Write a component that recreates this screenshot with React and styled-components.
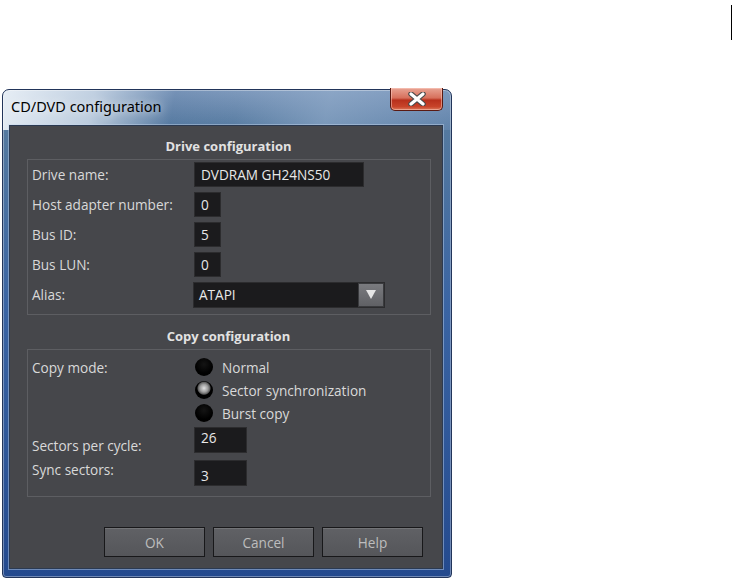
import styled, { createGlobalStyle } from "styled-components";

const GlobalStyle = createGlobalStyle`
  html, body {
    margin: 0;
    padding: 0;
    background: #ffffff;
  }
`;

export default function App() {
  return (
    <Page>
      <GlobalStyle />
      <TopStrip>
        <Mark />
      </TopStrip>
      <Window>
        <TitleBar>
          <Title>CD/DVD configuration</Title>
          <CloseButton>
            <svg width="18" height="14" viewBox="0 0 18 14">
              <path
                d="M3 2 L15 12 M15 2 L3 12"
                stroke="#4a4a4a"
                strokeWidth="5.5"
                strokeLinecap="round"
              />
              <path
                d="M3 2 L15 12 M15 2 L3 12"
                stroke="#ffffff"
                strokeWidth="3.2"
                strokeLinecap="round"
              />
            </svg>
          </CloseButton>
        </TitleBar>
        <Client>
          <SectionTitle>Drive configuration</SectionTitle>
          <Group>
            <Row>
              <Label>Drive name:</Label>
              <Field $w={170}>DVDRAM GH24NS50</Field>
            </Row>
            <Row>
              <Label>Host adapter number:</Label>
              <Field $w={27}>0</Field>
            </Row>
            <Row>
              <Label>Bus ID:</Label>
              <Field $w={27}>5</Field>
            </Row>
            <Row>
              <Label>Bus LUN:</Label>
              <Field $w={27}>0</Field>
            </Row>
            <Row>
              <Label>Alias:</Label>
              <Select>
                <SelectText>ATAPI</SelectText>
                <DropButton>
                  <svg width="10" height="9" viewBox="0 0 10 9">
                    <path d="M0 0 H10 L5 9 Z" fill="#e6e6e6" />
                  </svg>
                </DropButton>
              </Select>
            </Row>
          </Group>

          <SectionTitle>Copy configuration</SectionTitle>
          <Group $pad="8px 0 10px 4px">
            <ModeRow>
              <Label>Copy mode:</Label>
              <Radios>
                <RadioItem>
                  <Radio />
                  Normal
                </RadioItem>
                <RadioItem>
                  <Radio $on />
                  Sector synchronization
                </RadioItem>
                <RadioItem>
                  <Radio />
                  Burst copy
                </RadioItem>
              </Radios>
            </ModeRow>
            <NumRow>
              <NumLabel $shift={9}>Sectors per cycle:</NumLabel>
              <NumField>26</NumField>
            </NumRow>
            <NumRow>
              <NumLabel $shift={0}>Sync sectors:</NumLabel>
              <NumField $top={7}>3</NumField>
            </NumRow>
          </Group>

          <Buttons>
            <Button>OK</Button>
            <Button>Cancel</Button>
            <Button>Help</Button>
          </Buttons>
        </Client>
      </Window>
    </Page>
  );
}

//----- Styled Components

const Page = styled.div`
  width: 733px;
  height: 579px;
  overflow: hidden;
  font-family: "Open Sans", "Noto Sans", sans-serif;
`;

const TopStrip = styled.div`
  display: flex;
  justify-content: flex-end;
  height: 89px;
  padding-right: 1px;
  box-sizing: border-box;
`;

const Mark = styled.div`
  width: 1px;
  height: 35px;
  margin-top: 5px;
  background: #000000;
`;

const Window = styled.div`
  margin-left: 2px;
  width: 450px;
  height: 489px;
  box-sizing: border-box;
  padding: 0 8px 8px 6px;
  border-radius: 7px 7px 4px 4px;
  border: 1px solid #22355a;
  background:
    linear-gradient(
      100deg,
      rgba(236, 242, 248, 0.95) 0%,
      rgba(205, 218, 232, 0.85) 20%,
      rgba(70, 105, 150, 0.15) 38%,
      rgba(30, 60, 110, 0) 52%,
      rgba(150, 175, 205, 0.55) 72%,
      rgba(120, 150, 190, 0.35) 100%
    ) top / 100% 40px no-repeat,
    linear-gradient(180deg, #7f9abd 0px, #54799f 40px, #3a64a3 220px, #244a8e 100%);
  box-shadow: inset 0 0 0 1px rgba(255, 255, 255, 0.35);
  display: flex;
  flex-direction: column;
`;

const TitleBar = styled.div`
  height: 35px;
  display: flex;
  justify-content: space-between;
  align-items: flex-start;
`;

const Title = styled.div`
  font-family: "Noto Sans", "Open Sans", sans-serif;
  font-size: 14.5px;
  color: #000000;
  padding: 6px 0 0 2px;
  text-shadow: 0 0 8px rgba(255, 255, 255, 0.9);
`;

const CloseButton = styled.div`
  width: 53px;
  height: 23px;
  margin-top: -2px;
  box-sizing: border-box;
  border: 1px solid #5a1a12;
  border-top: none;
  border-radius: 0 0 5px 5px;
  background: linear-gradient(
    180deg,
    #e8a494 0%,
    #d7705c 45%,
    #b8301c 55%,
    #c8442a 85%,
    #dc7a5c 100%
  );
  box-shadow: inset 0 0 0 1px rgba(255, 210, 200, 0.5);
  display: flex;
  align-items: center;
  justify-content: center;
`;

const Client = styled.div`
  flex: 1;
  background: #46474b;
  border: 1px solid #2b3a52;
  box-shadow: 0 0 0 1px rgba(200, 215, 235, 0.45);
  padding: 0 12px 0 17px;
  display: flex;
  flex-direction: column;
`;

const SectionTitle = styled.div`
  font-size: 13px;
  font-weight: 700;
  color: #e2e2e2;
  text-align: center;
  height: 24px;
  line-height: 24px;
  padding-top: 9px;
  margin-bottom: 1px;
  &:first-child {
    padding-top: 7px;
    height: 26px;
    line-height: 26px;
    margin-bottom: 0;
  }
`;

const Group = styled.div`
  width: 404px;
  box-sizing: border-box;
  border: 1px solid #5d5e62;
  padding: ${(p) => p.$pad || "2px 0 7px 4px"};
  display: flex;
  flex-direction: column;
  gap: 5px;
`;

const Row = styled.div`
  display: flex;
  align-items: center;
  height: 25px;
`;

const Label = styled.div`
  width: 162px;
  font-size: 13.6px;
  color: #d9d9d9;
`;

const Field = styled.div`
  width: ${(p) => p.$w}px;
  height: 25px;
  box-sizing: border-box;
  background: #1b1b1d;
  border: 1px solid #2c2c2e;
  color: #e8e8e8;
  font-size: 13.6px;
  line-height: 23px;
  padding-left: 6px;
`;

const Select = styled.div`
  width: 192px;
  height: 26px;
  margin-left: -1px;
  box-sizing: border-box;
  background: #1b1b1d;
  border: 1px solid #2c2c2e;
  display: flex;
  align-items: stretch;
`;

const SelectText = styled.div`
  flex: 1;
  color: #e8e8e8;
  font-size: 13.6px;
  line-height: 24px;
  padding-left: 5px;
`;

const DropButton = styled.div`
  width: 24px;
  background: linear-gradient(180deg, #7a7b7f 0%, #606165 100%);
  border: 1px solid #3a3b3e;
  display: flex;
  align-items: center;
  justify-content: center;
`;

const ModeRow = styled.div`
  display: flex;
  align-items: flex-start;
`;

const Radios = styled.div`
  display: flex;
  flex-direction: column;
  gap: 5px;
  margin-left: 1px;
`;

const RadioItem = styled.div`
  display: flex;
  align-items: center;
  gap: 9px;
  height: 18px;
  font-size: 13.6px;
  color: #d9d9d9;
`;

const Radio = styled.span`
  width: 18px;
  height: 18px;
  border-radius: 50%;
  box-sizing: border-box;
  background: ${(p) =>
    p.$on
      ? "radial-gradient(circle at 50% 40%, #e2e2e2 0px, #9a9a9a 4px, #5c5c5c 6px, #000 7px)"
      : "radial-gradient(circle at 50% 35%, #141414 0px, #000 9px)"};
`;

const NumRow = styled.div`
  display: flex;
  align-items: flex-start;
`;

const NumLabel = styled.div`
  width: 162px;
  font-size: 13.6px;
  color: #d9d9d9;
  padding-top: ${(p) => p.$shift}px;
`;

const NumField = styled.div`
  width: 53px;
  height: 26px;
  box-sizing: border-box;
  background: #1b1b1d;
  border: 1px solid #2c2c2e;
  color: #e8e8e8;
  font-size: 13.6px;
  line-height: 16px;
  padding: ${(p) => p.$top || 2}px 0 0 6px;
`;

const Buttons = styled.div`
  display: flex;
  justify-content: flex-end;
  gap: 8px;
  margin-top: 30px;
  padding-right: 7px;
`;

const Button = styled.div`
  width: 101px;
  height: 30px;
  box-sizing: border-box;
  border: 1px solid #18181a;
  background: linear-gradient(180deg, #606165 0%, #55565a 100%);
  box-shadow: inset 0 1px 0 rgba(255, 255, 255, 0.12);
  color: #bdbdbd;
  font-size: 13.6px;
  display: flex;
  align-items: center;
  justify-content: center;
`;
